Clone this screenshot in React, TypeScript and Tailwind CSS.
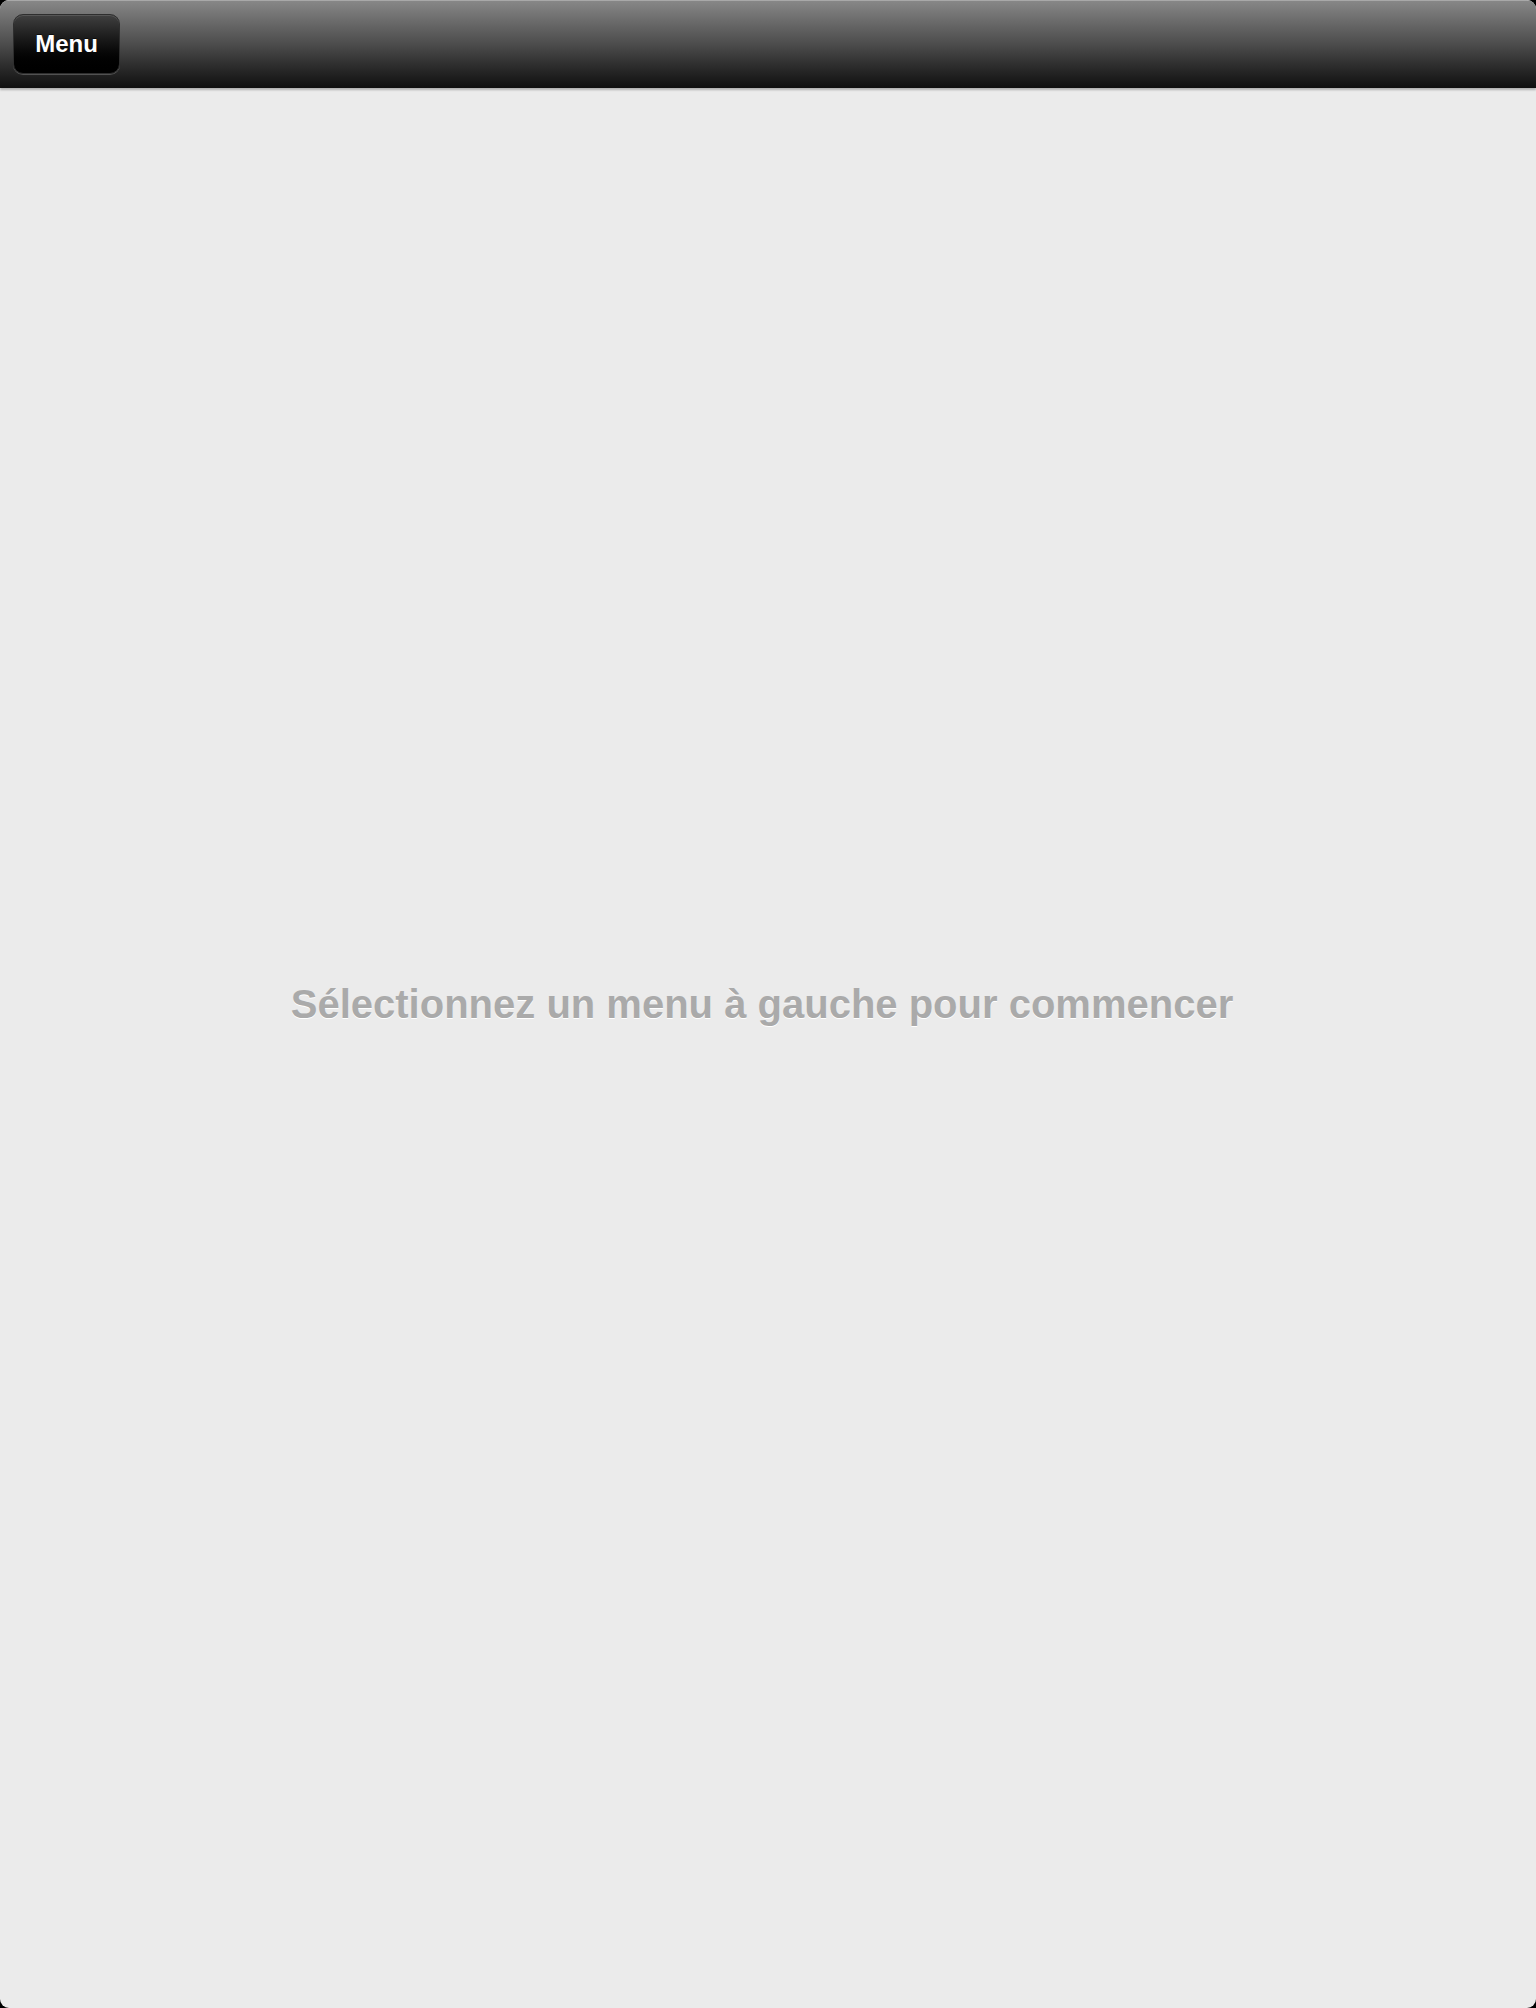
import React from "react";

export default function App() {
  return (
    <div className="w-[1536px] h-[2008px] bg-black overflow-hidden" style={{ fontFamily: '"Liberation Sans", Arial, sans-serif' }}>
      <div className="w-full h-full rounded-[9px] overflow-hidden flex flex-col bg-[#ebebeb]">
        <header className="h-[88px] shrink-0 relative border-t border-t-[#a8a8a8] bg-gradient-to-b from-[#878787] via-[#4c4c4c] to-[#101010] shadow-[0_2px_2px_rgba(0,0,0,0.25)] z-10 px-[13px] pt-[13px]">
          <button className="w-[107px] h-[60px] rounded-[10px] border border-[#2e2e2e] bg-gradient-to-b from-[#404040] to-[#000000] shadow-[0_1px_0_rgba(255,255,255,0.22),inset_0_1px_0_rgba(255,255,255,0.12)] flex items-center justify-center text-white font-bold text-[24px] [text-shadow:0_-1px_0_rgba(0,0,0,0.6)]">
            Menu
          </button>
        </header>
        <main className="flex-1 flex items-center justify-center pb-[88px]">
          <p className="text-[40px] font-bold text-[#aaaaaa] pr-[12px] [text-shadow:0_1px_0_#ffffff]">
            Sélectionnez un menu à gauche pour commencer
          </p>
        </main>
      </div>
    </div>
  );
}
